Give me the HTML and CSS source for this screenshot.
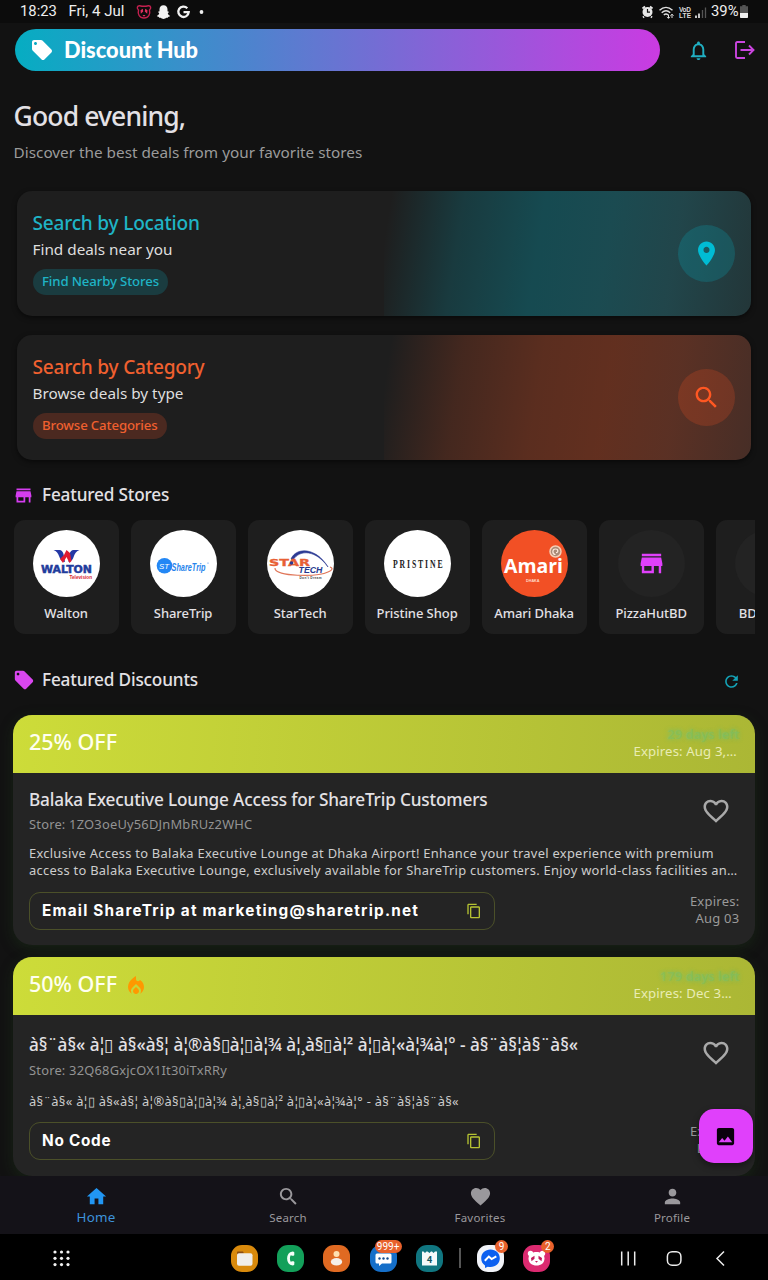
FILE: index.html
```html
<!DOCTYPE html>
<html lang="en">
<head>
<meta charset="utf-8">
<title>Discount Hub</title>
<link rel="stylesheet" href="styles.css">
</head>
<body>
<svg class="defs" width="0" height="0" aria-hidden="true">
  <symbol id="tag" viewBox="0 0 24 24"><path d="M21.41 11.58l-9-9C12.05 2.22 11.55 2 11 2H4c-1.1 0-2 .9-2 2v7c0 .55.22 1.05.59 1.42l9 9c.36.36.86.58 1.41.58.55 0 1.05-.22 1.41-.59l7-7c.37-.36.59-.86.59-1.41 0-.55-.23-1.06-.59-1.42zM5.5 7C4.67 7 4 6.33 4 5.5S4.67 4 5.5 4 7 4.67 7 5.5 6.33 7 5.5 7z"/></symbol>
  <symbol id="store" viewBox="0 0 24 24"><path d="M20 4H4v2h16V4zm1 10v-2l-1-5H4l-1 5v2h1v6h10v-6h4v6h2v-6h1zm-9 4H6v-4h6v4z"/></symbol>
  <symbol id="search" viewBox="0 0 24 24"><path d="M15.5 14h-.79l-.28-.27C15.41 12.59 16 11.11 16 9.5 16 5.91 13.09 3 9.5 3S3 5.91 3 9.5 5.91 16 9.5 16c1.61 0 3.09-.59 4.23-1.57l.27.28v.79l5 4.99L20.49 19l-4.99-5zm-6 0C7.01 14 5 11.99 5 9.5S7.01 5 9.5 5 14 7.01 14 9.5 11.99 14 9.5 14z"/></symbol>
  <symbol id="copy" viewBox="0 0 24 24"><path d="M16 1H4c-1.1 0-2 .9-2 2v14h2V3h12V1zm3 4H8c-1.1 0-2 .9-2 2v14c0 1.1.9 2 2 2h11c1.1 0 2-.9 2-2V7c0-1.1-.9-2-2-2zm0 16H8V7h11v14z"/></symbol>
  <symbol id="heart-line" viewBox="0 0 24 24"><path d="M16.5 3c-1.74 0-3.41.81-4.5 2.09C10.91 3.81 9.24 3 7.5 3 4.42 3 2 5.42 2 8.5c0 3.78 3.4 6.86 8.55 11.54L12 21.35l1.45-1.32C18.6 15.36 22 12.28 22 8.5 22 5.42 19.58 3 16.5 3zm-4.4 15.55l-.1.1-.1-.1C7.14 14.24 4 11.39 4 8.5 4 6.5 5.5 5 7.5 5c1.54 0 3.04.99 3.57 2.36h1.87C13.46 5.99 14.96 5 16.5 5c2 0 3.5 1.5 3.5 3.5 0 2.89-3.14 5.74-7.9 10.05z"/></symbol>
</svg>

<div class="status">
  <span class="clock">18:23</span>
  <span class="date">Fri, 4 Jul</span>
  <svg class="status-left" width="72" height="16" viewBox="0 0 72 16">
    <g fill="none" stroke="#c4204f" stroke-width="1.4"><path d="M2.5 6C.6 4.500 1 1.600 3.600 1.700L6 2.200h4l2.400-.5C15 1.600 15.400 4.500 13.500 6c1 4-.8 8-5.500 8S1.500 10 2.500 6z"/></g>
    <path d="M4.500 6.200l2.300-1.400.4 2.700-2.400 2.200zM11.500 6.200L9.200 4.800l-.4 2.700 2.400 2.200zM6.500 11h3L8 12.800z" fill="#e0305f"/>
    <path d="M27.500 1.200c2.600 0 4 1.700 4 4.300v1.800c.7.200 1.300.2 1.300.8s-1 .8-1 1.300c.4 1.300 1.300 1.900 2.300 2.300.2.900-1.300 1-2 1.300-.2.800-.6.900-1.700.8-1 .7-1.700 1.200-2.900 1.200s-1.900-.5-2.900-1.200c-1.100.1-1.500 0-1.700-.8-.7-.3-2.200-.4-2-1.300 1-.4 1.900-1 2.300-2.300 0-.5-1-.7-1-1.300s.6-.6 1.300-.8V5.500c0-2.600 1.400-4.300 4-4.300z" fill="#f2f2f2"/>
    <path d="M51.300 4.200A5.200 5.200 0 1 0 52.700 8.200H47.500" fill="none" stroke="#f2f2f2" stroke-width="2.300"/>
    <circle cx="65.500" cy="8" r="1.900" fill="#eee"/>
  </svg>
  <svg class="status-right" width="66" height="16" viewBox="0 0 66 16">
    <circle cx="6.500" cy="8" r="5" fill="#e8e8e8"/><path d="M1.500 4.500L4 2.500M11.500 4.500L9 2.500M3 12.500L2 13.500M10 12.500l1 1" stroke="#e8e8e8" stroke-width="1.800"/><path d="M6.500 5v3.200H9" fill="none" stroke="#111" stroke-width="1.200"/>
    <path d="M18.500 6.200c4-3.700 9-3.700 13 0M20.700 8.800c2.700-2.400 6-2.400 8.500 0M22.800 11c1.400-1.200 3-1.200 4.300 0" fill="none" stroke="#e0e0e0" stroke-width="1.400"/><path d="M27.500 10.500v3.800M26 12.800l1.500 1.500 1.500-1.500M31 14v-3.800M29.500 11.700L31 10.200l1.500 1.500" fill="none" stroke="#e0e0e0" stroke-width="1"/>
    <text x="38" y="7.600" font-size="6.500" font-weight="700" fill="#ddd" textLength="12">VoD</text><text x="38" y="14.300" font-size="6.500" font-weight="700" fill="#ddd" textLength="12">LTE</text>
    <path d="M55 14v-2.500M58 14V9.500" stroke="#e5e5e5" stroke-width="1.700"/><path d="M61.500 14V6M64.500 14V3.500" stroke="#555" stroke-width="1.300"/>
  </svg>
  <span class="battery">39%</span>
  <svg width="8" height="13" viewBox="0 0 8 13"><path d="M2.300 0h3.400v1.300H8V13H0V1.300h2.300z" fill="#545454"/><path d="M0 8h8v4q0 1-1 1H1q-1 0-1-1z" fill="#f0f0f0"/></svg>
</div>

<header class="appbar">
  <div class="brand"><svg width="24" height="24" fill="#fff"><use href="#tag"/></svg><span>Discount Hub</span></div>
  <svg class="bell" width="23" height="23" viewBox="0 0 24 24" fill="#20afc2"><path d="M12 22c1.100 0 2-.9 2-2h-4c0 1.100.9 2 2 2zm6-6v-5c0-3.070-1.630-5.640-4.500-6.320V4c0-.83-.67-1.500-1.500-1.500s-1.500.67-1.500 1.500v.68C7.640 5.360 6 7.920 6 11v5l-2 2v1h16v-1l-2-2zm-2 1H8v-6c0-2.480 1.510-4.500 4-4.500s4 2.020 4 4.500v6z"/></svg>
  <svg width="20" height="18" viewBox="0 0 20 18" fill="none" stroke="#cb45e0" stroke-width="1.900"><path d="M10 1H2.200Q1 1 1 2.200v13.600Q1 17 2.200 17H10M5.500 9H18.500M14 4.500L18.500 9 14 13.500"/></svg>
</header>

<main>
  <h1>Good evening,</h1>
  <p class="sub">Discover the best deals from your favorite stores</p>

  <section class="search-card location">
    <div class="search-text"><h2>Search by Location</h2><p>Find deals near you</p><span class="chip">Find Nearby Stores</span></div>
    <div class="tint"><span class="round"><svg width="29" height="29" viewBox="0 0 24 24" fill="#00bcd4"><path d="M12 2C8.130 2 5 5.130 5 9c0 5.250 7 13 7 13s7-7.750 7-13c0-3.870-3.130-7-7-7zm0 9.500c-1.380 0-2.500-1.120-2.500-2.500s1.120-2.500 2.500-2.500 2.500 1.120 2.500 2.500-1.120 2.500-2.500 2.500z"/></svg></span></div>
  </section>
  <section class="search-card category">
    <div class="search-text"><h2>Search by Category</h2><p>Browse deals by type</p><span class="chip">Browse Categories</span></div>
    <div class="tint"><span class="round"><svg width="29" height="29" fill="#ff5722"><use href="#search"/></svg></span></div>
  </section>

  <div class="section-title stores-title"><svg width="21" height="21" fill="#d53df0"><use href="#store"/></svg><h3>Featured Stores</h3></div>
  <div class="stores">
    <div class="store"><svg width="67" height="67" viewBox="0 0 67 67"><circle cx="33.500" cy="33.500" r="33.500" fill="#fff"/><path d="M20.500 20h6c2 0 3.500 2 4 4l1.500 8c-3-.2-5-3-6-6-.7-2.500-2.500-5-5.500-6zM46.500 20h-6c-2 0-3.500 2-4 4l-1 8c3-.2 4.500-3 5.500-6 .7-2.500 2.500-5 5.500-6z" fill="#2438a5"/><path d="M33.500 20l3.500 3 1.500 8-2 2-3-6-3.500 6-3-4 4-4z" fill="#e01b32"/><text x="8" y="42.700" font-size="10.700" font-weight="700" fill="#1f3c9c" stroke="#1f3c9c" stroke-width=".5" font-family="DejaVu Sans" textLength="51" lengthAdjust="spacingAndGlyphs">WALTON</text><text x="36.500" y="48.700" font-size="4.800" font-weight="700" fill="#d8232f" textLength="22.500" lengthAdjust="spacingAndGlyphs">Television</text></svg><span>Walton</span></div>
    <div class="store"><svg width="67" height="67" viewBox="0 0 67 67"><circle cx="33.500" cy="33.500" r="33.500" fill="#fff"/><circle cx="14.500" cy="35.700" r="7.800" fill="#2387f5"/><text x="9" y="38.500" font-size="7.500" font-style="italic" fill="#fff" textLength="10" lengthAdjust="spacingAndGlyphs">ST</text><text x="21.500" y="41" font-size="11.500" font-weight="700" font-style="italic" fill="#2784ec" textLength="34" lengthAdjust="spacingAndGlyphs">ShareTrip</text><circle cx="58" cy="33" r=".6" fill="#2784ec"/></svg><span>ShareTrip</span></div>
    <div class="store"><svg width="67" height="67" viewBox="0 0 67 67"><circle cx="33.500" cy="33.500" r="33.500" fill="#fff"/><path d="M24 29C29 17 49 17 61 37 49 20 33 19 26 30z" fill="#2c3a94" stroke="#2c3a94" stroke-width=".6"/><path d="M8 38c-1 9 43 9 53 4 5-2 5-4 2-5" fill="none" stroke="#e0775a" stroke-width="1.200"/><text x="2" y="35.500" font-size="9.500" font-weight="700" fill="#e85f35" stroke="#e85f35" stroke-width=".3" font-family="DejaVu Sans" textLength="41" lengthAdjust="spacingAndGlyphs">STAR</text><text x="31.500" y="43" font-size="9.500" font-weight="700" font-style="italic" fill="#26388e" textLength="24" lengthAdjust="spacingAndGlyphs">TECH</text><text x="32.500" y="48.500" font-size="3.200" font-weight="700" fill="#444" textLength="22">Don't Dream</text><circle cx="24.500" cy="33" r="1.800" fill="#2c3a94"/></svg><span>StarTech</span></div>
    <div class="store"><svg width="67" height="67" viewBox="0 0 67 67"><circle cx="33.500" cy="33.500" r="33.500" fill="#fff"/><text transform="translate(9 38) scale(.62 1)" font-size="12.500" font-weight="700" fill="#222" font-family="Liberation Serif" textLength="80">PRISTINE</text></svg><span>Pristine Shop</span></div>
    <div class="store"><svg width="67" height="67" viewBox="0 0 67 67"><circle cx="33.500" cy="33.500" r="33.500" fill="#f25025"/><text x="3" y="42.500" font-size="19" font-weight="700" fill="#fff" font-family="Open Sans" textLength="59" lengthAdjust="spacingAndGlyphs">Amari</text><text x="25" y="51.500" font-size="3.800" font-weight="700" fill="#ffd9c8" textLength="13.500">DHAKA</text><circle cx="54.500" cy="21.500" r="5.500" fill="#a98b78" stroke="#f7cdb4" stroke-width="1.500"/><path d="M54.500 24.500c-3.500 0-3.500-5.500 0-5.500 3 0 3 3.700.5 3.700" fill="none" stroke="#ffe9dc" stroke-width="1.200"/></svg><span>Amari Dhaka</span></div>
    <div class="store"><i class="blank"><svg width="29" height="29" fill="#e040fb"><use href="#store"/></svg></i><span>PizzaHutBD</span></div>
    <div class="store"><i class="blank"></i><span class="cut">BD Shops</span></div>
  </div>

  <div class="section-title discounts-title"><svg width="22" height="22" fill="#d946ef"><use href="#tag"/></svg><h3>Featured Discounts</h3>
    <svg class="refresh" width="19" height="19" viewBox="0 0 24 24" fill="#14a3b7"><path d="M17.650 6.350C16.200 4.900 14.210 4 12 4c-4.420 0-7.990 3.580-7.990 8s3.570 8 7.990 8c3.730 0 6.840-2.550 7.730-6h-2.080c-.82 2.330-3.040 4-5.650 4-3.310 0-6-2.690-6-6s2.690-6 6-6c1.660 0 3.140.69 4.220 1.780L13 11h7V4l-2.350 2.350z"/></svg></div>

  <article class="deal">
    <div class="deal-head"><strong>25% OFF</strong><div class="when"><span class="left">29 days left</span><span class="exp">Expires: Aug 3,…</span></div></div>
    <div class="deal-body">
      <div class="deal-top"><div><h4>Balaka Executive Lounge Access for ShareTrip Customers</h4><p class="store-id">Store: 1ZO3oeUy56DJnMbRUz2WHC</p></div><svg width="30" height="30" fill="#a9a9a9"><use href="#heart-line"/></svg></div>
      <p class="desc">Exclusive Access to Balaka Executive Lounge at Dhaka Airport! Enhance your travel experience with premium<br>access to Balaka Executive Lounge, exclusively available for ShareTrip customers. Enjoy world-class facilities an…</p>
      <div class="deal-foot"><div class="code"><b>Email ShareTrip at marketing@sharetrip.net</b><svg width="16" height="16" fill="#b5c332"><use href="#copy"/></svg></div><p>Expires:<br>Aug 03</p></div>
    </div>
  </article>

  <article class="deal second">
    <div class="deal-head"><strong>50% OFF</strong><svg class="flame" width="24" height="24" viewBox="0 0 24 24" fill="#ff9800"><path d="M12 12.900l-2.130 2.090c-.56.560-.87 1.290-.87 2.070C9 18.680 10.350 20 12 20s3-1.320 3-2.940c0-.78-.31-1.520-.87-2.070L12 12.900z"/><path d="M16 6l-.44.550C14.380 8.020 12 7.190 12 5.300V2S4 6 4 13c0 2.920 1.560 5.470 3.890 6.860-.56-.79-.89-1.760-.89-2.800 0-1.320.52-2.560 1.470-3.500L12 10.100l3.530 3.470c.95.930 1.470 2.170 1.470 3.500 0 1.020-.31 1.960-.85 2.750 1.890-1.150 3.290-3.060 3.710-5.300.66-3.550-1.070-6.900-3.860-8.520z"/></svg><div class="when"><span class="left">179 days left</span><span class="exp">Expires: Dec 3…</span></div></div>
    <div class="deal-body">
      <div class="deal-top"><div><h4>à§¨à§« à<i>¦</i>▯ à§«à§<i>¦</i> à<i>¦</i>®à§▯à<i>¦</i>▯à<i>¦</i>¾ à<i>¦</i>¸à§▯à<i>¦</i>² à<i>¦</i>▯à<i>¦</i>«à<i>¦</i>¾à<i>¦</i>° - à§¨à§<i>¦</i>à§¨à§«</h4><p class="store-id">Store: 32Q68GxjcOX1It30iTxRRy</p></div><svg width="30" height="30" fill="#a9a9a9"><use href="#heart-line"/></svg></div>
      <p class="desc">à§¨à§« à<i>¦</i>▯ à§«à§<i>¦</i> à<i>¦</i>®à§▯à<i>¦</i>▯à<i>¦</i>¾ à<i>¦</i>¸à§▯à<i>¦</i>² à<i>¦</i>▯à<i>¦</i>«à<i>¦</i>¾à<i>¦</i>° - à§¨à§<i>¦</i>à§¨à§«</p>
      <div class="deal-foot"><div class="code"><b>No Code</b><svg width="16" height="16" fill="#b5c332"><use href="#copy"/></svg></div><p>Expires:<br>Dec 31</p></div>
    </div>
  </article>
  <button class="fab" aria-label="Gallery"><svg width="23" height="23" viewBox="0 0 24 24" fill="#0a000c"><path d="M21 19V5c0-1.100-.9-2-2-2H5c-1.100 0-2 .9-2 2v14c0 1.100.9 2 2 2h14c1.100 0 2-.9 2-2zM8.500 13.500l2.500 3.010L14.500 12l4.500 6H5l3.500-4.500z"/></svg></button>
</main>

<nav class="tabs">
  <a class="on"><svg width="23" height="23" viewBox="0 0 24 24"><path d="M10 20v-6h4v6h5v-8h3L12 3 2 12h3v8z"/></svg><span>Home</span></a>
  <a><svg width="23" height="23"><use href="#search"/></svg><span>Search</span></a>
  <a><svg width="23" height="23" viewBox="0 0 24 24"><path d="M12 21.350l-1.450-1.320C5.400 15.360 2 12.280 2 8.500 2 5.420 4.420 3 7.500 3c1.740 0 3.410.81 4.500 2.090C13.090 3.810 14.760 3 16.500 3 19.580 3 22 5.420 22 8.500c0 3.780-3.400 6.860-8.550 11.540L12 21.350z"/></svg><span>Favorites</span></a>
  <a><svg width="23" height="23" viewBox="0 0 24 24"><path d="M12 12c2.210 0 4-1.790 4-4s-1.790-4-4-4-4 1.790-4 4 1.790 4 4 4zm0 2c-2.670 0-8 1.340-8 4v2h16v-2c0-2.660-5.330-4-8-4z"/></svg><span>Profile</span></a>
</nav>

<footer class="dock">
  <svg class="grid" width="17" height="17" viewBox="0 0 17 17" fill="#f2f2f2"><g id="dots"><circle cx="2" cy="2" r="1.600"/><circle cx="8.500" cy="2" r="1.600"/><circle cx="15" cy="2" r="1.600"/></g><use href="#dots" y="6.300"/><use href="#dots" y="12.600"/></svg>
  <div class="apps">
    <svg width="27" height="27" viewBox="0 0 27 27"><rect width="27" height="27" rx="11" fill="#d98a0c"/><path d="M6 9V7.200Q6 6.500 6.800 6.500H12l1 2z" fill="#8a4c12"/><rect x="6" y="8.300" width="15.500" height="12.500" rx="2" fill="#f0eeea"/></svg>
    <svg width="27" height="27" viewBox="0 0 27 27"><rect width="27" height="27" rx="11" fill="#13a05a"/><path d="M16 8.200C10 7 10 20 16 18.800" fill="none" stroke="#f4fff8" stroke-width="2.800"/><rect x="14" y="6.800" width="3.300" height="4" rx="1" fill="#f4fff8"/><rect x="14" y="16.200" width="3.300" height="4" rx="1" fill="#f4fff8"/></svg>
    <svg width="27" height="27" viewBox="0 0 27 27"><rect width="27" height="27" rx="11" fill="#e06a22"/><circle cx="13.500" cy="9" r="3" fill="#ffe0b0"/><ellipse cx="13.500" cy="16.800" rx="5.700" ry="3.700" fill="#f5efe9"/></svg>
    <div class="app"><svg width="27" height="27" viewBox="0 0 27 27"><rect width="27" height="27" rx="11" fill="#156fc9"/><path d="M7 8.500h13q1.500 0 1.500 1.500v7q0 1.500-1.500 1.500H12L9 21v-2.500H7Q5.500 18.500 5.500 17v-7Q5.500 8.500 7 8.500z" fill="#fff"/><g fill="#174e90"><circle cx="9.500" cy="13.500" r="1.200"/><circle cx="13.500" cy="13.500" r="1.200"/><circle cx="17.500" cy="13.500" r="1.200"/></g></svg><em class="wide">999+</em></div>
    <svg width="27" height="27" viewBox="0 0 27 27"><rect width="27" height="27" rx="11" fill="#107680"/><path d="M6 6.500h1.500l1.500 1.500 1.500-1.500h1L13.500 8l1.500-1.500h1L17.500 8 19 6.500h2v14H6z" fill="#f4fafa"/><text x="13.500" y="17.500" text-anchor="middle" font-size="9.500" font-weight="700" fill="#125560">4</text></svg>
    <i class="rule"></i>
    <div class="app"><svg width="27" height="27" viewBox="0 0 27 27"><rect width="27" height="27" rx="11" fill="#f1f3f8"/><path d="M13.500 4.500c5.300 0 9.300 3.900 9.300 8.800s-4 8.800-9.300 8.800c-1 0-1.900-.1-2.700-.4L8 23v-2.500c-2.400-1.600-3.800-4.200-3.800-7.200 0-4.900 4-8.800 9.300-8.800z" fill="#0b5ff0"/><path d="M7.800 15.800l4-4.200 2.800 2.500 4.700-2.800" fill="none" stroke="#fff" stroke-width="2"/></svg><em>9</em></div>
    <div class="app"><svg width="27" height="27" viewBox="0 0 27 27"><rect width="27" height="27" rx="11" fill="#dc2a70"/><circle cx="7.500" cy="8.500" r="2.700" fill="#fff"/><circle cx="19.500" cy="8.500" r="2.700" fill="#fff"/><path d="M5.500 13.500c0-4.500 3.500-6.500 8-6.500s8 2 8 6.500-3.500 7-8 7-8-2.500-8-7z" fill="#fff"/><path d="M8 13l3.500-2.200v3l-3 2.500zM19 13l-3.500-2.200v3l3 2.500zM12 16h3l-1.500 1.700z" fill="#c21d5f"/></svg><em>2</em></div>
  </div>
  <svg class="keys" width="110" height="17" viewBox="0 0 110 17" fill="none" stroke="#ececec" stroke-width="1.500"><path d="M1.700 1.500v14M8.200 1.500v14M14.700 1.500v14"/><rect x="47.400" y="1.700" width="13.500" height="13.500" rx="4.700"/><path d="M104 1.500l-7 7 7 7"/></svg>
</footer>
</body>
</html>
```
FILE: styles.css
```css
* { box-sizing: border-box; margin: 0; padding: 0; }
body { width: 768px; height: 1280px; overflow: hidden; background: #121212; color: #e3e1e5; font-family: "Noto Sans", sans-serif; display: flex; flex-direction: column; }
svg { display: block; flex: none; }
.defs { position: absolute; }
h1, h2, h3, h4, p, span, b, strong, em { white-space: nowrap; }
h1, h2, h3, h4 { font-weight: 500; }

.status { height: 23px; background: #0c0c0c; display: flex; align-items: center; padding: 0 20px; font: 14.3px/23px Roboto, sans-serif; color: #eee; flex: none; }
.clock { width: 48.500px; font-size: 14.800px; }
.date { width: 67px; font-size: 15px; }
.status-right { margin-left: auto; font-family: "Liberation Sans", sans-serif; }
.battery { margin-left: 4px; width: 29px; font-size: 14.800px; }

.appbar { height: 58px; padding: 6px 13px 0 15px; display: flex; align-items: flex-start; flex: none; }
.brand { width: 645px; height: 42px; border-radius: 21px; background: linear-gradient(90deg, #06adc2, #ca3be2); display: flex; align-items: center; padding-left: 15px; gap: 10px; color: #fff; font: 900 21.800px/42px Lato, sans-serif; }
.bell { margin: 10px 0 0 27.500px; }
.appbar > svg:last-child { margin: 12px 0 0 25px; }

main { flex: 1; padding: 0 13.500px 0 13px; overflow: hidden; position: relative; }
h1 { font-size: 26.500px; line-height: 36px; margin: 17px 0 0 .6px; letter-spacing: -.87px; }
.sub { font-size: 15.300px; line-height: 22px; margin: 7px 0 0 .6px; color: #9b9b9b; }

.search-card { margin: 28px 4px 0; height: 125px; border-radius: 15px; background: #1e1e1e; display: flex; overflow: hidden; box-shadow: 0 2px 5px rgba(0,0,0,.5); }
.category { margin-top: 19px; }
.search-text { width: 50%; padding: 17px 15.500px; }
.search-text h2 { font-size: 19.100px; line-height: 30px; letter-spacing: -.22px; }
.search-text p { font-size: 15.300px; line-height: 22px; margin: 0 0 9px; color: #dedede; }
.chip { display: inline-block; height: 26px; line-height: 25px; border-radius: 13px; padding: 0 9.500px; font-size: 13.200px; font-weight: 500; letter-spacing: -.13px; }
.tint { width: 50%; display: flex; align-items: center; justify-content: flex-end; padding-right: 15.500px; }
.round { width: 57.500px; height: 57.500px; border-radius: 50%; display: flex; align-items: center; justify-content: center; }
.location h2, .location .chip { color: #1fb4c6; }
.location .chip { background: #1a3c40; }
.location .tint { background: linear-gradient(99deg, rgba(0,188,212,0) 2%, rgba(0,188,212,.18) 21%, rgba(0,188,212,.28) 42%, rgba(20,175,195,.31) 60%, rgba(40,150,165,.33) 78%, rgba(50,130,140,.24) 100%); }
.location .round { background: rgba(0,188,212,.2); }
.category h2, .category .chip { color: #f0602f; }
.category .chip { background: #4b2920; }
.category .tint { background: linear-gradient(99deg, rgba(255,87,34,0) 2%, rgba(255,87,34,.17) 21%, rgba(255,87,34,.27) 42%, rgba(255,87,34,.3) 60%, rgba(225,90,50,.31) 78%, rgba(200,95,65,.24) 100%); }
.category .round { background: rgba(255,87,34,.2); }

.section-title { display: flex; align-items: center; height: 24px; }
.section-title h3 { font-size: 17.200px; line-height: 24px; letter-spacing: -.17px; }
.stores-title { margin-top: 23px; }
.stores-title h3 { margin-left: 8px; }
.discounts-title { margin-top: 34px; }
.discounts-title h3 { margin-left: 7px; }
.refresh { margin: 2px 13.500px 0 auto; }

.stores { display: flex; gap: 12px; margin: 13px 0 0 .600px; height: 114px; overflow: hidden; }
.store { flex: none; width: 105px; height: 114px; border-radius: 11px; background: #1e1e1e; display: flex; flex-direction: column; align-items: center; padding-top: 10px; }
.store > svg { font-family: "Liberation Sans", sans-serif; }
.store > span { font-size: 13px; font-weight: 500; line-height: 20px; margin-top: 6px; letter-spacing: -.07px; }
.blank { width: 67px; height: 67px; border-radius: 50%; background: #232323; display: flex; align-items: center; justify-content: center; }

.deal { margin-top: 23px; height: 230px; border-radius: 19px; background: #242424; overflow: hidden; box-shadow: 0 4px 14px rgba(30,60,25,.4); }
.deal.second { margin-top: 12px; height: 219px; }
.deal-head { height: 57.500px; padding: 0 15px 0 16px; background: linear-gradient(94deg, #cddc39, #abb735); display: flex; align-items: center; }
.deal-head strong { font-size: 21.500px; font-weight: 500; line-height: 30px; color: #fffff0; margin-top: -4px; }
.flame { margin: 1px 0 0 7px; }
.when { margin: -2px 0 0 auto; width: 106px; display: flex; flex-direction: column; }
.left { align-self: flex-end; font-size: 13px; line-height: 17px; font-weight: 600; color: rgba(100,195,125,.3); text-shadow: 0 0 4px rgba(95,195,125,.75); }
.exp { font-size: 13.200px; line-height: 17px; color: #e9ecb4; letter-spacing: .12px; }
.deal-body { padding: 14px 15px 0 16px; }
.deal-top { display: flex; justify-content: space-between; height: 57px; }
.deal-top > svg { margin: 9.500px 8.500px 0 0; }
.deal h4 { font-size: 17.200px; line-height: 26px; letter-spacing: -.16px; }
.store-id { font-size: 12.900px; line-height: 18px; margin-top: 2px; color: #939393; letter-spacing: .2px; }
.desc { height: 34px; margin-top: 1px; font-size: 12.900px; line-height: 17.200px; color: #cdcdcd; letter-spacing: .28px; }
.deal i { font-style: normal; margin: 0 -.138em; }
.deal-foot { display: flex; justify-content: space-between; margin-top: 13px; }
.code { width: 465.500px; flex: none; height: 38px; border: 1px solid #4b5029; border-radius: 11px; padding: 0 12px; display: flex; align-items: center; justify-content: space-between; }
.code b { font: 700 15.300px/38px Inter, sans-serif; color: #fff; letter-spacing: 1.220px; }
.deal-foot p { font-size: 13px; line-height: 17.200px; margin-top: 1px; text-align: right; color: #9a9a9a; letter-spacing: .25px; }
.second .deal-body { padding-top: 17.500px; }
.second h4 { letter-spacing: 0; }
.second .store-id { margin-top: 3px; }
.second .deal-top > svg { margin-top: 5.500px; }
.second .desc { height: 18px; margin-top: 4px; letter-spacing: .31px; }
.second .deal-foot { margin-top: 11px; }
.second .code b { letter-spacing: .75px; }

.fab { position: absolute; right: 15.500px; bottom: 13px; width: 54px; height: 54px; border: 0; border-radius: 15px; background: #e040fb; display: flex; align-items: center; justify-content: center; box-shadow: 0 3px 7px rgba(0,0,0,.4); }

.tabs { height: 58px; flex: none; background: #141218; display: flex; }
.tabs a { flex: 1; display: flex; flex-direction: column; align-items: center; padding-top: 9px; color: #9a989c; fill: #9a989c; }
.tabs span { font-size: 11.500px; line-height: 18px; margin-top: 1px; letter-spacing: .2px; }
.tabs .on { color: #3d93dc; fill: #2196f3; }
.tabs .on span { font-size: 13.400px; margin-top: 0; }

.dock { height: 46px; flex: none; background: #000; display: flex; align-items: center; padding: 2px 38px 0 53px; }
.apps { display: flex; align-items: center; gap: 19.200px; margin-left: 161px; font-family: Roboto, sans-serif; }
.app { position: relative; }
.app em { position: absolute; left: 18px; top: -5px; min-width: 13px; height: 13px; border-radius: 7px; background: #e8612c; color: #fff; font-style: normal; font-size: 10px; line-height: 13px; text-align: center; }
.app em.wide { left: 5px; width: 27px; }
.rule { width: 1.500px; height: 20px; background: #555; margin: 0 -2.800px; }
.keys { margin-left: auto; }
```
